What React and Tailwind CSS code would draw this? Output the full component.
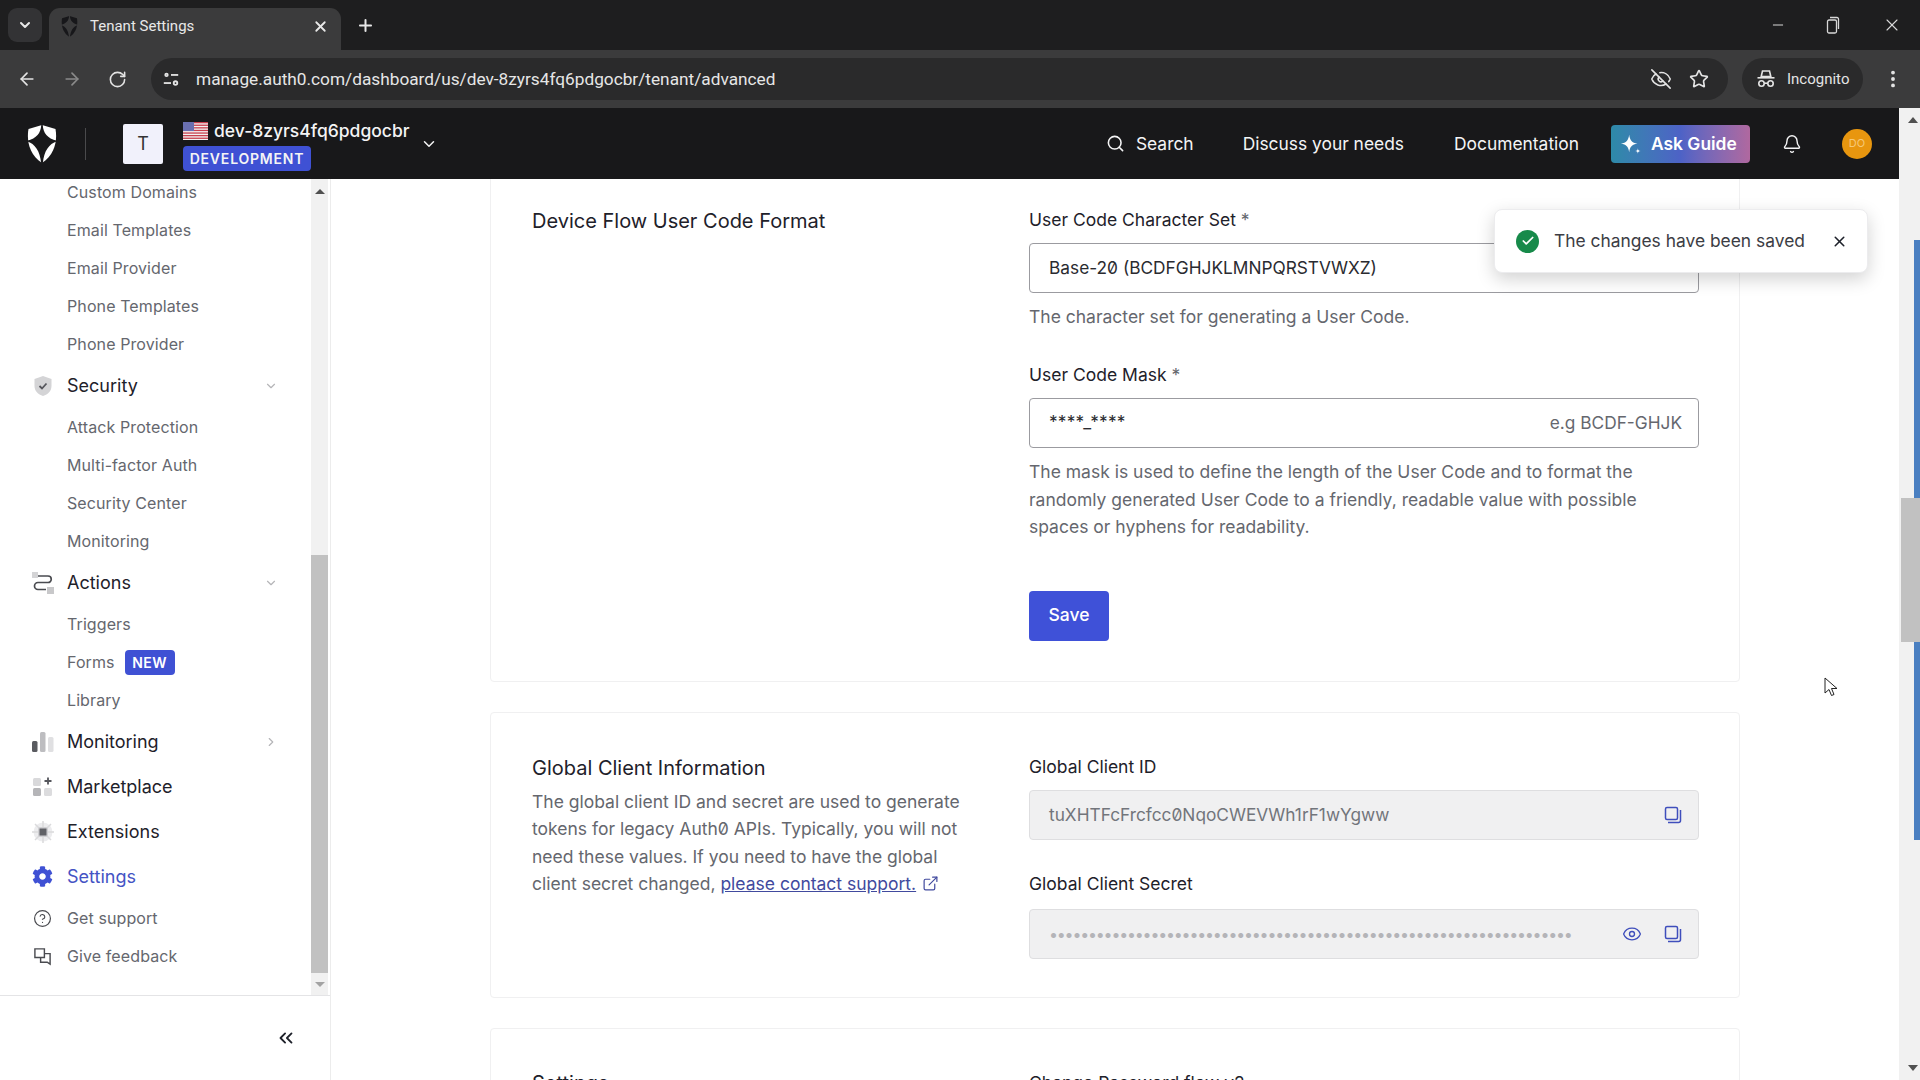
import React from 'react';
import { ArrowLeft, ArrowRight, RotateCw, EyeOff, Star, X, Plus, ChevronDown, ChevronRight, ChevronsLeft, Search, Bell, CircleHelp, Minus, ExternalLink, Eye, EllipsisVertical, Check } from 'lucide-react';
import { FaCog } from 'react-icons/fa';

const inter = "font-['Inter','Liberation_Sans',sans-serif]";

function Shield({ className, fill = '#fff', cut = '#18181a' }) {
  return (
    <svg viewBox="0 0 30 38" className={className}>
      <path d="M15 0 L28.5 4 C30.5 15 28 30 15 38 C2 30 -.5 15 1.5 4 Z" fill={fill} />
      <path d="M14.3 -1 L15.7 -1 C16 8 20 13.5 31 16 C22 18.5 16.800 26 15.800 39 L14.200 39 C13.200 26 8 18.500 -1 16 C10 13.500 14 8 14.300 -1Z" fill={cut} />
    </svg>
  );
}

function Flag() {
  const stripes = [0, 1, 2, 3, 4, 5, 6];
  return (
    <svg viewBox="0 0 25 18" className="w-[25px] h-[18px] shrink-0">
      <rect width="25" height="18" fill="#f2f2f2" />
      {stripes.map((s) => <rect key={s} y={s * 2.6} width="25" height="1.3" fill="#c8404e" />)}
      <rect width="11" height="9" fill="#6a6fb0" />
    </svg>
  );
}

function Copy() {
  return (
    <svg viewBox="0 0 18 18" className="w-[18px] h-[18px]" fill="none" stroke="#3f4ebc" strokeWidth="1.5">
      <rect x="1.5" y="1.5" width="12" height="12" rx="1.5" />
      <path d="M4 16.5h10.5a2 2 0 0 0 2-2V4" />
    </svg>
  );
}

function Sub({ children, extra, icon }) {
  return (
    <div className="h-[38px] flex items-center text-[16px] text-[#65676e] tracking-[0.1px]">
      <div className="w-[67px] pl-[33px] shrink-0 flex items-center">{icon}</div>
      <span>{children}</span>
      {extra}
    </div>
  );
}

function Top({ icon, children, chevron, active }) {
  return (
    <div className={`h-[45px] flex items-center text-[18px] ${active ? 'text-[#4453c4]' : 'text-[#1e212a]'}`}>
      <div className="w-[67px] pl-[32px] shrink-0 flex items-center">{icon}</div>
      <span className="flex-1">{children}</span>
      {chevron === 'down' && <ChevronDown className="w-[14px] h-[14px] text-[#b5b5b8] mr-[33px]" />}
      {chevron === 'right' && <ChevronRight className="w-[14px] h-[14px] text-[#b5b5b8] mr-[33px]" />}
    </div>
  );
}

function Label({ children, req }) {
  return (
    <div className="text-[17.5px] leading-[28px] text-[#1e212a]">
      {children}{req && <span className="text-[#65676e]"> *</span>}
    </div>
  );
}

export default function App() {
  return (
    <div className={`w-[1920px] h-[1080px] overflow-hidden flex flex-col bg-white ${inter} slashed-zero`}>
      {/* browser tab strip */}
      <div className="h-[50px] shrink-0 bg-[#1e1e1f] flex items-start font-['Roboto',sans-serif] text-[#e8e8e8]">
        <div className="ml-[8px] mt-[8px] w-[34px] h-[34px] rounded-[9px] bg-[#333335] flex items-center justify-center">
          <ChevronDown className="w-[16px] h-[16px]" strokeWidth={3} />
        </div>
        <div className="ml-[7px] mt-[8px] w-[292px] h-[42px] rounded-t-[11px] bg-[#3b3b3c] flex items-center pl-[12px] pr-[12px] pb-[6px]">
          <Shield className="w-[17px] h-[21px]" fill="#17171a" cut="#3b3b3c" />
          <span className="ml-[12px] text-[15px] flex-1">Tenant Settings</span>
          <X className="w-[17px] h-[17px]" strokeWidth={2.5} />
        </div>
        <Plus className="ml-[15px] mt-[16px] w-[19px] h-[19px]" strokeWidth={2.5} />
        <div className="flex-1" />
        <div className="flex items-center mt-[15px] text-[#d8d8d8]">
          <Minus className="w-[16px] h-[16px] mr-[40px]" strokeWidth={1.5} />
          <svg viewBox="0 0 14 20" className="w-[14px] h-[20px] mr-[42px]" fill="none" stroke="currentColor" strokeWidth="1.3">
            <rect x="1.5" y="5" width="9" height="13" rx="1.5" />
            <path d="M4 2.5h7a1.5 1.5 0 0 1 1.5 1.5v10" />
          </svg>
          <X className="w-[20px] h-[20px] mr-[18px]" strokeWidth={1.3} />
        </div>
      </div>

      {/* browser toolbar */}
      <div className="h-[58px] shrink-0 bg-[#3b3b3c] flex items-center font-['Roboto',sans-serif] text-[#e4e4e4]">
        <ArrowLeft className="ml-[17px] w-[20px] h-[20px]" />
        <ArrowRight className="ml-[25px] w-[20px] h-[20px] text-[#8a8a8a]" />
        <RotateCw className="ml-[26px] w-[19px] h-[19px]" />
        <div className="ml-[24px] w-[1577px] h-[42px] rounded-full bg-[#2a2a2b] flex items-center pl-[11px] pr-[19px]">
          <svg viewBox="0 0 20 20" className="w-[18px] h-[18px]" fill="none" stroke="currentColor" strokeWidth="2">
            <circle cx="5" cy="5.5" r="1.4" /><path d="M10 5.5h8" />
            <circle cx="15" cy="14.5" r="2" /><path d="M2 14.5h8" />
          </svg>
          <span className="ml-[16px] mt-[1px] text-[17.25px] flex-1 text-[#e6e6e6]">manage.auth0.com/dashboard/us/dev-8zyrs4fq6pdgocbr/tenant/advanced</span>
          <EyeOff className="w-[22px] h-[22px] mr-[17px]" strokeWidth={1.7} />
          <Star className="w-[20px] h-[20px]" strokeWidth={2} />
        </div>
        <div className="ml-[14px] w-[121px] h-[42px] rounded-full bg-[#2a2a2b] flex items-center pl-[14px]">
          <svg viewBox="0 0 20 20" className="w-[20px] h-[20px]" fill="none" stroke="currentColor" strokeWidth="1.600">
            <path d="M6.500 2h7l1.300 5.500H5.200z" />
            <path d="M1.500 8.800h17" />
            <circle cx="5.500" cy="14.500" r="2.700" />
            <circle cx="14.500" cy="14.500" r="2.700" />
            <path d="M8.200 14.200h3.600" />
          </svg>
          <span className="ml-[11px] text-[15px]">Incognito</span>
        </div>
        <EllipsisVertical className="ml-[19px] w-[22px] h-[22px]" strokeWidth={2.2} />
      </div>

      <div className="flex-1 min-h-0 flex">
        <div className="flex-1 min-w-0 flex flex-col">
          {/* app header */}
          <header className="h-[71px] shrink-0 bg-[#18181a] flex items-center text-[#f4f4f5]">
            <Shield className="ml-[27px] w-[30px] h-[38px]" />
            <div className="ml-[28px] w-px h-[32px] bg-[#4a4a4c]" />
            <div className="ml-[37px] w-[40px] h-[40px] rounded-[2px] bg-[#f1f1fb] text-[#333] flex items-center justify-center text-[18px]">T</div>
            <div className="ml-[20px] mt-[5px] flex flex-col gap-[5px]">
              <div className="flex items-center gap-[6px] h-[20px]">
                <Flag />
                <span className="text-[17.5px] leading-[20px] font-medium">dev-8zyrs4fq6pdgocbr</span>
              </div>
              <div className="w-[128px] h-[25px] rounded-[4px] bg-[#3f51d4] flex items-center justify-center text-[14px] font-semibold tracking-[0.8px]">DEVELOPMENT</div>
            </div>
            <ChevronDown className="ml-[10px] w-[18px] h-[18px]" />
            <div className="flex-1" />
            <Search className="w-[19px] h-[19px]" />
            <span className="ml-[11px] mt-[1px] text-[17.4px]">Search</span>
            <span className="ml-[49px] mt-[1px] text-[17.4px]">Discuss your needs</span>
            <span className="ml-[50px] mt-[1px] text-[17.4px]">Documentation</span>
            <div className="ml-[32px] w-[139px] h-[38px] rounded-[4px] bg-gradient-to-r from-[#2d8aa8] via-[#4d62c6] to-[#b0689f] flex items-center pl-[9px] font-semibold text-[17.4px] text-white">
              <svg viewBox="0 0 24 24" className="w-[22px] h-[22px]" fill="#fff">
                <path d="M10 2c.8 6 3 9 9 9.500-6 1-8.200 3.500-9 9.500-.8-6-3-8.500-9-9.500 6-.5 8.200-3.500 9-9.500z" />
                <path d="M19.500 16.500c.2 2 .8 2.800 3 3-2.200.2-2.800 1-3 3-.2-2-.8-2.800-3-3 2.200-.2 2.800-1 3-3z" />
              </svg>
              <span className="ml-[9px] mt-[1px]">Ask Guide</span>
            </div>
            <Bell className="ml-[32px] w-[20px] h-[20px]" strokeWidth={1.7} />
            <div className="ml-[40px] mr-[27px] w-[30px] h-[30px] rounded-full bg-[#e8960f] text-[#f6c877] flex items-center justify-center text-[11px]">DO</div>
          </header>

          <div className="flex-1 min-h-0 flex">
            {/* sidebar */}
            <aside className="w-[331px] shrink-0 border-r border-[#ececec] flex flex-col">
              <div className="h-[816px] shrink-0 flex">
                <nav className="w-[311px] shrink-0 overflow-hidden">
                  <div className="-mt-[6px]">
                    <Sub>Custom Domains</Sub>
                    <Sub>Email Templates</Sub>
                    <Sub>Email Provider</Sub>
                    <Sub>Phone Templates</Sub>
                    <Sub>Phone Provider</Sub>
                    <Top chevron="down" icon={
                      <svg viewBox="0 0 22 22" className="w-[22px] h-[22px]">
                        <path d="M11 1l8.500 3v7c0 5-3.500 8.500-8.500 10-5-1.500-8.500-5-8.500-10V4z" fill="#d4d4d6" />
                        <path d="M7.500 11l2.500 2.500 4.500-5" fill="none" stroke="#55565c" strokeWidth="1.800" />
                      </svg>
                    }>Security</Top>
                    <Sub>Attack Protection</Sub>
                    <Sub>Multi-factor Auth</Sub>
                    <Sub>Security Center</Sub>
                    <Sub>Monitoring</Sub>
                    <Top chevron="down" icon={
                      <svg viewBox="0 0 22 22" className="w-[22px] h-[22px]">
                        <rect x="0" y="0" width="6" height="6" fill="#d4d4d6" />
                        <rect x="15" y="15" width="7" height="7" fill="#c8c8ca" />
                        <path d="M6 4h10a3 3 0 0 1 0 6.500H6a3 3 0 0 0 0 7h8" fill="none" stroke="#4a4b50" strokeWidth="1.700" />
                      </svg>
                    }>Actions</Top>
                    <Sub>Triggers</Sub>
                    <Sub extra={<span className="ml-[10px] w-[50px] h-[25px] rounded-[4px] bg-[#3f51d4] text-white text-[14px] font-semibold tracking-[0.5px] flex items-center justify-center">NEW</span>}>Forms</Sub>
                    <Sub>Library</Sub>
                    <Top chevron="right" icon={
                      <svg viewBox="0 0 22 22" className="w-[22px] h-[22px]">
                        <rect x="0" y="10" width="5.500" height="11" rx="1.500" fill="#5a5b60" />
                        <rect x="8" y="1" width="5.500" height="20" rx="1.500" fill="#bdbdc0" />
                        <rect x="16" y="6" width="5.500" height="15" rx="1.500" fill="#e0e0e2" />
                      </svg>
                    }>Monitoring</Top>
                    <Top icon={
                      <svg viewBox="0 0 22 22" className="w-[22px] h-[22px]">
                        <rect x="1" y="2" width="8" height="8" rx="1.500" fill="#d9d9db" />
                        <rect x="1" y="12" width="8" height="8" rx="1.500" fill="#b5b5b8" />
                        <rect x="12" y="12" width="8" height="8" rx="1.500" fill="#dcdcde" />
                        <path d="M16 1.500v7M12.500 5h7" stroke="#55565c" strokeWidth="1.800" />
                      </svg>
                    }>Marketplace</Top>
                    <Top icon={
                      <svg viewBox="0 0 22 22" className="w-[22px] h-[22px]">
                        <circle cx="11" cy="11" r="9.500" fill="#ececee" />
                        <path d="M11 0v22M0 11h22M3 3l16 16M19 3L3 19" stroke="#dadadc" strokeWidth="1.500" />
                        <rect x="6" y="6" width="10" height="10" rx="2" fill="#cfcfd2" />
                        <rect x="7.500" y="7.500" width="7" height="7" fill="#606166" />
                      </svg>
                    }>Extensions</Top>
                    <Top active icon={<FaCog className="w-[21px] h-[21px] text-[#3f51d4]" />}>Settings</Top>
                    <Sub icon={<CircleHelp className="w-[19px] h-[19px] text-[#4a4b50]" strokeWidth={1.5} />}>Get support</Sub>
                    <Sub icon={
                      <svg viewBox="0 0 20 20" className="w-[19px] h-[19px]" fill="none" stroke="#4a4b50" strokeWidth="1.500">
                        <path d="M2 2h10v9H6l-4 0z" />
                        <path d="M12 7h6v11l-3-2H8v-5" />
                      </svg>
                    }>Give feedback</Sub>
                  </div>
                </nav>
                <div className="w-[17px] shrink-0 bg-[#f1f1f1] flex flex-col">
                  <div className="h-[24px] flex items-center justify-center text-[#505050]">
                    <div className="w-0 h-0 border-x-[5px] border-x-transparent border-b-[5px] border-b-[#505050]" />
                  </div>
                  <div className="mt-[352px] h-[418px] bg-[#c1c1c1]" />
                  <div className="flex-1 flex items-center justify-center">
                    <div className="w-0 h-0 border-x-[5px] border-x-transparent border-t-[5px] border-t-[#a3a3a3]" />
                  </div>
                </div>
              </div>
              <div className="flex-1 border-t border-[#e4e4e6] flex items-center justify-end pr-[33px]">
                <ChevronsLeft className="w-[22px] h-[22px] text-[#1e212a]" strokeWidth={2} />
              </div>
            </aside>

            {/* main */}
            <main className="flex-1 min-w-0 relative overflow-hidden px-[159px]">
              <div className="-mt-[10px] flex flex-col gap-[30px]">
                <section className="border border-[#f0f0f1] rounded-[4px] pl-[41px] pr-[40px] pt-[36px] pb-[40px] grid grid-cols-[497px_minmax(0,1fr)]">
                  <h2 className="mt-[1px] text-[20px] leading-[28px] text-[#1e212a]">Device Flow User Code Format</h2>
                  <div>
                    <Label req>User Code Character Set</Label>
                    <div className="mt-[9px] h-[50px] rounded-[4px] border border-[#9b9ba0] flex items-center pl-[19px] text-[17.3px] text-[#2a2b30]">Base-20 (BCDFGHJKLMNPQRSTVWXZ)</div>
                    <p className="mt-[10px] text-[17.5px] leading-[28px] text-[#65676e]">The character set for generating a User Code.</p>
                    <div className="mt-[30px]"><Label req>User Code Mask</Label></div>
                    <div className="mt-[9px] h-[50px] rounded-[4px] border border-[#9b9ba0] flex items-center justify-between pl-[19px] pr-[16px] text-[17.3px]">
                      <span className="text-[#2a2b30] -mt-[2px] tracking-[0.2px]">****_****</span>
                      <span className="text-[#65676e]">e.g BCDF-GHJK</span>
                    </div>
                    <p className="mt-[10px] text-[17.5px] leading-[27.500px] text-[#65676e]">The mask is used to define the length of the User Code and to format the randomly generated User Code to a friendly, readable value with possible spaces or hyphens for readability.</p>
                    <button className="mt-[50px] block w-[80px] h-[50px] rounded-[4px] bg-[#3f51d8] text-white text-[17.5px] font-medium">Save</button>
                  </div>
                </section>

                <section className="border border-[#f0f0f1] rounded-[4px] pl-[41px] pr-[40px] pt-[40px] pb-[38px] grid grid-cols-[497px_minmax(0,1fr)]">
                  <div className="w-[440px] mt-[1px]">
                    <h2 className="text-[20px] leading-[28px] text-[#1e212a]">Global Client Information</h2>
                    <p className="mt-[6px] text-[17.5px] leading-[27.500px] text-[#65676e]">
                      The global client ID and secret are used to generate tokens for legacy Auth0 APIs. Typically, you will not need these values. If you need to have the global client secret changed, <span className="text-[#414a9e] underline">please contact support.</span>
                      <ExternalLink className="inline ml-[6px] w-[17px] h-[17px] text-[#414a9e] -mt-[3px]" strokeWidth={1.700} />
                    </p>
                  </div>
                  <div>
                    <Label>Global Client ID</Label>
                    <div className="mt-[9px] h-[50px] rounded-[4px] border border-[#dedee0] bg-[#f0f0f1] flex items-center pl-[19px] pr-[16px] text-[17.3px] text-[#72757b]">
                      <span className="flex-1">tuXHTFcFrcfcc0NqoCWEVWh1rF1wYgww</span>
                      <Copy />
                    </div>
                    <div className="mt-[30px]"><Label>Global Client Secret</Label></div>
                    <div className="mt-[11px] h-[50px] rounded-[4px] border border-[#dedee0] bg-[#f0f0f1] flex items-center pl-[19px] pr-[16px] text-[#b4b4b8]">
                      <span className="flex-1 min-w-0 text-[16px] tracking-[-1.200px] overflow-hidden whitespace-nowrap">{'•'.repeat(67)}</span>
                      <Eye className="ml-[30px] shrink-0 w-[20px] h-[20px] text-[#3f4ebc] mr-[22px]" strokeWidth={1.600} />
                      <Copy />
                    </div>
                  </div>
                </section>

                <section className="border border-[#f0f0f1] rounded-[4px] pl-[41px] pr-[40px] pt-[40px] pb-[39px] grid grid-cols-[497px_minmax(0,1fr)]">
                  <h2 className="text-[20px] leading-[28px] text-[#1e212a]">Settings</h2>
                  <Label>Change Password flow v2</Label>
                </section>
              </div>

              {/* toast */}
              <div className="absolute left-[1163px] top-[30px] w-[374px] h-[64px] rounded-[8px] bg-white border border-[#ececee] shadow-[0_6px_18px_rgba(0,0,0,0.18)] flex items-center pl-[21px]">
                <div className="w-[23px] h-[23px] rounded-full bg-[#178a4a] flex items-center justify-center">
                  <Check className="w-[14px] h-[14px] text-white" strokeWidth={3} />
                </div>
                <span className="ml-[15px] text-[17.4px] text-[#3c3d44]">The changes have been saved</span>
                <X className="ml-[26px] w-[17px] h-[17px] text-[#1e212a]" strokeWidth={2.200} />
              </div>

              {/* mouse cursor */}
              <svg viewBox="0 0 14 20" className="absolute left-[1493px] top-[498px] w-[14px] h-[20px]" fill="#fff" stroke="#222" strokeWidth="1">
                <path d="M1 1v15l4-3.500 2.500 6 2.500-1-2.500-6H13z" />
              </svg>
            </main>
          </div>
        </div>

        {/* page scrollbar */}
        <div className="w-[21px] shrink-0 bg-[#f1f1f1] relative">
          <div className="absolute left-[9px] top-[9px] w-0 h-0 border-x-[5px] border-x-transparent border-b-[6px] border-b-[#505050]" />
          <div className="absolute right-0 top-[132px] w-[6px] h-[600px] bg-[#4a7fc1]" />
          <div className="absolute right-0 top-[390px] w-[19px] h-[144px] bg-[#c1c1c1]" />
          <div className="absolute left-[9px] bottom-[9px] w-0 h-0 border-x-[5px] border-x-transparent border-t-[6px] border-t-[#505050]" />
        </div>
      </div>
    </div>
  );
}
